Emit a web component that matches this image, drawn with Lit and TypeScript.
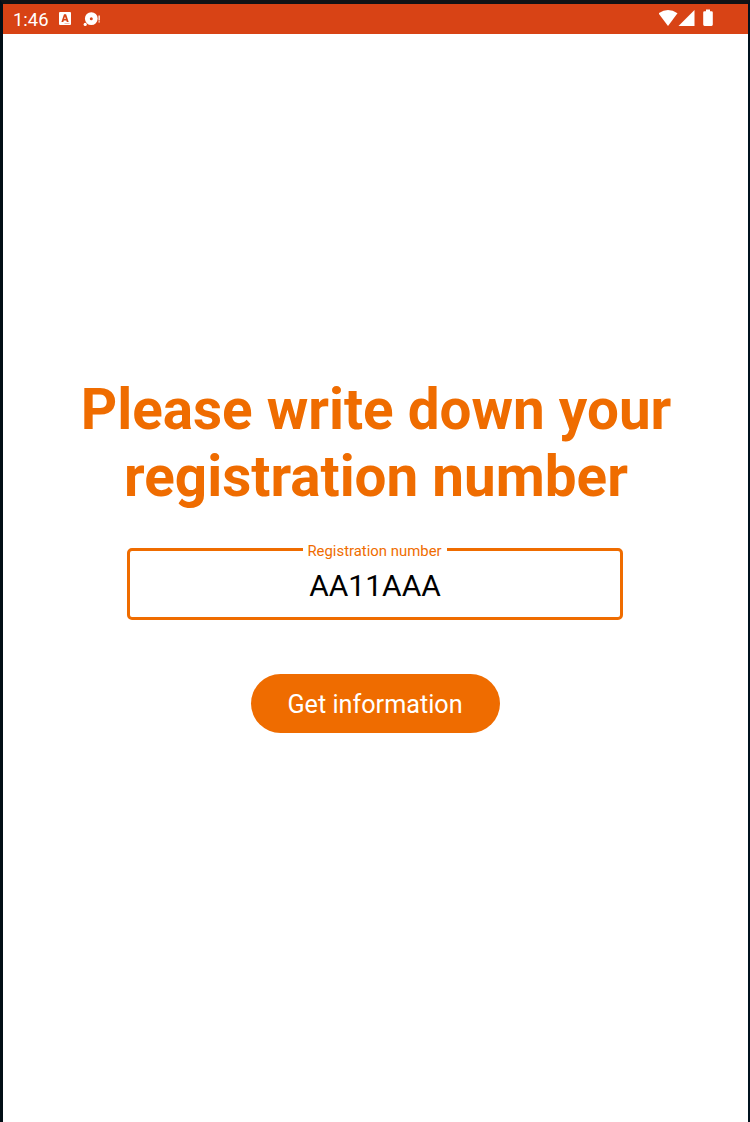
import { LitElement, html, css } from "lit";
import { customElement } from "lit/decorators.js";

@customElement("app-root")
class AppRoot extends LitElement {
  static styles = css`
    :host { display: block; font-family: Roboto, sans-serif; }
    .device { box-sizing: border-box; height: 1122px; background: #fff; border-style: solid; border-color: #111315 #00121e #00121e #020e16; border-width: 4px 2px 0 3px; display: flex; flex-direction: column; overflow: hidden; }
    .bar { height: 30px; flex: none; background: #d84315; color: #fff; display: flex; align-items: center; padding: 0 33px 0 10px; box-sizing: border-box; }
    .time { width: 35px; font-size: 18.4px; line-height: 20px; padding-top: 1px; white-space: nowrap; }
    .left { margin-left: 8px; }
    .right { margin-left: auto; }
    svg { display: block; flex: none; }
    main { display: flex; flex-direction: column; align-items: center; padding-top: 342px; }
    h1 { margin: 0; padding-left: 1px; font-size: 56.6px; line-height: 67px; font-weight: 700; color: #ef6c00; text-align: center; white-space: nowrap; }
    fieldset { box-sizing: border-box; width: 496px; height: 81px; margin: 29px 1px 0 0; padding: 0; border: 3px solid #ef6c00; border-radius: 5px; text-align: center; }
    legend { margin: 0 auto; padding: 4px 5.5px 0 4.500px; font-size: 14.9px; line-height: 17px; color: #ef6c00; }
    .value { padding-top: 8px; font-size: 30px; line-height: 36px; color: #000; }
    button { margin: 54px 1px 0 0; width: 249px; height: 59px; border: 0; border-radius: 30px; background: #ef6c00; color: #fff; font: 400 25.2px Roboto, sans-serif; padding: 2px 0 0; }
  `;
  render() {
    return html`<div class="device">
      <div class="bar">
        <span class="time">1:46</span>
        <svg class="left" width="46" height="30" viewBox="56 4 46 30" fill="#fff">
          <path d="M60 12h10q1 0 1 1v11q0 1-1 1H60q-1 0-1-1V13q0-1 1-1Z"/>
          <path fill="#d84315" fill-rule="evenodd" d="M64 14.300 61.400 22h1.900l.5-1.600h2.500l.5 1.600h1.900L66.100 14.300ZM65 16.400l.8 2.500h-1.600Z"/>
          <path fill="#f1b29f" d="M64.500 23h5v.8h-5z"/>
          <path fill-rule="evenodd" d="M91.300 12.200a6.400 6.400 0 1 1 0 12.800 6.400 6.400 0 0 1 0-12.800ZM91.300 17.300a1.500 1.500 0 1 0 0 3 1.500 1.500 0 0 0 0-3Z"/>
          <circle cx="85.200" cy="24.400" r="1.600"/><path d="M98.500 15.500h1.300v5h-1.300zM98.500 21.300h1.300v1.300h-1.300z"/>
        </svg>
        <svg class="right" width="56" height="30" viewBox="659 4 56 30" fill="#fff">
          <path d="M658.500 13.300Q668 6.700 677.500 13.300L668 26Z"/><path d="M694.500 10v16h-16Z"/>
          <path d="M706 9.500h4v1.800h1.500q1.300 0 1.300 1.300v12q0 1.300-1.300 1.300h-7q-1.300 0-1.300-1.300v-12q0-1.300 1.300-1.300h1.500Z"/>
        </svg>
      </div>
      <main>
        <h1>Please write down your<br>registration number</h1>
        <fieldset><legend>Registration number</legend><div class="value">AA11AAA</div></fieldset>
        <button>Get information</button>
      </main>
    </div>`;
  }
}
